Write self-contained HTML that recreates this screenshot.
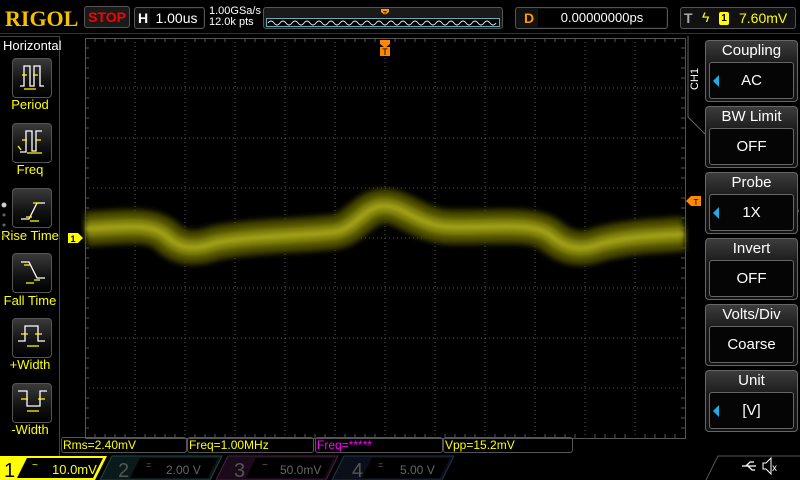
<!DOCTYPE html>
<html><head><meta charset="utf-8"><style>
*{margin:0;padding:0;box-sizing:border-box}
body{width:800px;height:480px;background:#000;position:relative;overflow:hidden;font-family:"Liberation Sans",sans-serif;color:#fff}
.a{position:absolute}
.btn{position:absolute;left:12px;width:40px;height:40px;border:1px solid #555;border-radius:4px;background:linear-gradient(#3a3a3a,#111 60%,#000)}
.lbl{position:absolute;left:0;width:60px;text-align:center;color:#ff0;font-size:13px}
.menu{position:absolute;left:705px;width:93px;height:62px;border:1px solid #666;border-radius:4px;background:linear-gradient(#3c3c3c,#1a1a1a 40%,#111)}
.menu .t{position:absolute;top:1px;left:0;width:100%;text-align:center;font-size:15px}
.menu .v{position:absolute;left:3px;right:3px;top:21px;height:37px;border:1px solid #666;border-radius:3px;background:#050505;text-align:center;font-size:15px;line-height:35px}
.tri{position:absolute;left:3px;top:12px;width:0;height:0;border-top:6px solid transparent;border-bottom:6px solid transparent;border-right:6px solid #1ab0e6}
.meas{position:absolute;top:437px;height:16px;border:1px solid #555;border-radius:3px;font-size:12px;line-height:14px;padding-left:1px;color:#ff0}
</style></head><body>
<div class="a" style="left:5px;top:6px;font:bold 22px 'Liberation Serif',serif;color:#f4c000">RIGOL</div>
<div class="a" style="left:84px;top:6px;width:46px;height:22px;border:1px solid #555;border-radius:3px;background:#1a1a1a;color:#f00;font-weight:bold;font-size:14px;text-align:center;line-height:20px">STOP</div>
<div class="a" style="left:134px;top:7px;width:71px;height:22px;border:1px solid #555;border-radius:3px;background:#111"><span class="a" style="left:3px;top:2px;font-weight:bold;font-size:14px">H</span><div class="a" style="left:15px;top:1px;width:53px;height:18px;background:#000;font-size:14px;text-align:center;line-height:18px">1.00us</div></div>
<div class="a" style="left:209px;top:6px;font-size:11px;line-height:11px">1.00GSa/s<br>12.0k pts</div>
<div class="a" style="left:263px;top:7px;width:240px;height:22px;border:1px solid #555;border-radius:3px;background:#1a1a1a"></div>
<svg class="a" style="left:266px;top:6px" width="234" height="24"><rect x="0.5" y="12.5" width="233" height="8" fill="#000" stroke="#6ab" stroke-width="1"/><path d="M2 17 Q5 13 8 17 T14 17 T20 17 T26 17 T32 17 T38 17 T44 17 T50 17 T56 17 T62 17 T68 17 T74 17 T80 17 T86 17 T92 17 T98 17 T104 17 T110 17 T116 17 T122 17 T128 17 T134 17 T140 17 T146 17 T152 17 T158 17 T164 17 T170 17 T176 17 T182 17 T188 17 T194 17 T200 17 T206 17 T212 17 T218 17 T224 17 T230 17" fill="none" stroke="#ddd" stroke-width="1"/><path d="M115 3h8v3l-4 3-4-3z" fill="#f90"/><text x="119" y="10" font-size="7" text-anchor="middle" fill="#000" font-family="Liberation Sans">T</text></svg>
<div class="a" style="left:515px;top:7px;width:153px;height:22px;border:1px solid #555;border-radius:3px;background:#111"><span class="a" style="left:8px;top:2px;font-weight:bold;font-size:14px;color:#f90">D</span><div class="a" style="left:22px;top:1px;width:128px;height:18px;background:#000;font-size:13px;text-align:center;line-height:18px">0.00000000ps</div></div>
<div class="a" style="left:680px;top:7px;width:116px;height:22px;border:1px solid #555;border-radius:3px;background:#111"><span class="a" style="left:3px;top:2px;font-weight:bold;font-size:14px;color:#aaa">T</span><span class="a" style="left:21px;top:1px;font-size:14px;color:#ff0">&#x03DF;</span><span class="a" style="left:38px;top:4px;width:10px;height:13px;background:#ff0;border-radius:2px;color:#000;font-size:10px;text-align:center;line-height:13px;font-weight:bold">1</span><span class="a" style="left:58px;top:2px;font-size:14px;color:#ff0">7.60mV</span></div>
<div class="a" style="left:0;top:33px;width:800px;height:1px;background:#333"></div>
<div class="a" style="left:0;top:36px;width:60px;height:444px;border-right:1px solid #444;border-top:1px solid #444"></div>
<div class="a" style="left:3px;top:38px;font-size:13px">Horizontal</div>
<div class="btn" style="top:58px"></div><div class="lbl" style="top:97px">Period</div>
<div class="btn" style="top:123px"></div><div class="lbl" style="top:162px">Freq</div>
<div class="btn" style="top:188px"></div><div class="lbl" style="top:228px">Rise Time</div>
<div class="btn" style="top:253px"></div><div class="lbl" style="top:293px">Fall Time</div>
<div class="btn" style="top:318px"></div><div class="lbl" style="top:357px">+Width</div>
<div class="btn" style="top:383px"></div><div class="lbl" style="top:422px">-Width</div>
<svg class="a" style="left:0;top:0" width="60" height="440" fill="none" stroke-width="1.3">
<path d="M20 86h4V66h6v20h4V66h6v20h4" stroke="#fff"/><path d="M22 75h5M33 75h5M24 89h12" stroke="#ff0"/>
<path d="M20 152h6V131h6v20h4V131h6" stroke="#fff"/><path d="M22 140h5M36 140h5M27 153h15M18 146l3 4" stroke="#ff0"/>
<path d="M21 219h8l8-16h8" stroke="#fff"/><path d="M26 217h6M33 203h6M30 221h9" stroke="#ff0"/>
<path d="M21 262h8l8 16h8" stroke="#fff"/><path d="M24 265h6M34 280h6M26 283h8" stroke="#ff0"/>
<path d="M18 341h7V326h13v15h7" stroke="#fff"/><path d="M21 334h7M35 334h7M27 346h12" stroke="#ff0"/>
<path d="M18 391h9v15h13V391h7" stroke="#fff"/><path d="M21 399h7M38 399h7M27 411h12" stroke="#ff0"/>
<circle cx="4" cy="205" r="2.5" fill="#ccc" stroke="none"/><circle cx="4" cy="215" r="1.5" fill="#666" stroke="none"/><circle cx="4" cy="225" r="1.5" fill="#666" stroke="none"/><circle cx="4" cy="235" r="1.5" fill="#666" stroke="none"/>
</svg>
<svg class="a" style="left:0;top:0" width="800" height="480">
<defs><filter id="b" filterUnits="userSpaceOnUse" x="60" y="150" width="650" height="150"><feGaussianBlur stdDeviation="3"/></filter><filter id="b2" filterUnits="userSpaceOnUse" x="60" y="150" width="650" height="150"><feGaussianBlur stdDeviation="1.2"/></filter></defs>
<rect x="85.5" y="38.5" width="600" height="400" fill="none" stroke="#555"/>
<g stroke="#555" stroke-dasharray="1 3">
<path d="M135 38v400M185 38v400M235 38v400M285 38v400M335 38v400M435 38v400M485 38v400M535 38v400M585 38v400M635 38v400"/>
<path d="M85 88h600M85 138h600M85 188h600M85 288h600M85 338h600M85 388h600"/>
<path d="M85 238h600M385 38v400"/>
</g>
<g stroke="#555">
<path d="M95 38v4M105 38v4M115 38v4M125 38v4M145 38v4M155 38v4M165 38v4M175 38v4M195 38v4M205 38v4M215 38v4M225 38v4M245 38v4M255 38v4M265 38v4M275 38v4M295 38v4M305 38v4M315 38v4M325 38v4M345 38v4M355 38v4M365 38v4M375 38v4M395 38v4M405 38v4M415 38v4M425 38v4M445 38v4M455 38v4M465 38v4M475 38v4M495 38v4M505 38v4M515 38v4M525 38v4M545 38v4M555 38v4M565 38v4M575 38v4M595 38v4M605 38v4M615 38v4M625 38v4M645 38v4M655 38v4M665 38v4M675 38v4"/>
<path d="M95 438v-4M105 438v-4M115 438v-4M125 438v-4M145 438v-4M155 438v-4M165 438v-4M175 438v-4M195 438v-4M205 438v-4M215 438v-4M225 438v-4M245 438v-4M255 438v-4M265 438v-4M275 438v-4M295 438v-4M305 438v-4M315 438v-4M325 438v-4M345 438v-4M355 438v-4M365 438v-4M375 438v-4M395 438v-4M405 438v-4M415 438v-4M425 438v-4M445 438v-4M455 438v-4M465 438v-4M475 438v-4M495 438v-4M505 438v-4M515 438v-4M525 438v-4M545 438v-4M555 438v-4M565 438v-4M575 438v-4M595 438v-4M605 438v-4M615 438v-4M625 438v-4M645 438v-4M655 438v-4M665 438v-4M675 438v-4"/>
<path d="M85 48h4M85 58h4M85 68h4M85 78h4M85 98h4M85 108h4M85 118h4M85 128h4M85 148h4M85 158h4M85 168h4M85 178h4M85 198h4M85 208h4M85 218h4M85 228h4M85 248h4M85 258h4M85 268h4M85 278h4M85 298h4M85 308h4M85 318h4M85 328h4M85 348h4M85 358h4M85 368h4M85 378h4M85 398h4M85 408h4M85 418h4M85 428h4"/>
<path d="M685 48h-4M685 58h-4M685 68h-4M685 78h-4M685 98h-4M685 108h-4M685 118h-4M685 128h-4M685 148h-4M685 158h-4M685 168h-4M685 178h-4M685 198h-4M685 208h-4M685 218h-4M685 228h-4M685 248h-4M685 258h-4M685 268h-4M685 278h-4M685 298h-4M685 308h-4M685 318h-4M685 328h-4M685 348h-4M685 358h-4M685 368h-4M685 378h-4M685 398h-4M685 408h-4M685 418h-4M685 428h-4"/>
</g>
<g fill="none">
<path d="M86 229 C130 226 150 224 165 235 C180 250 195 250 215 243 C250 236 300 236 335 232 C355 229 365 205 385 206 C405 207 420 226 450 227 C500 228 530 222 550 235 C565 248 580 252 600 244 C630 236 660 236 684 234" stroke="#4a4a00" stroke-width="34" filter="url(#b)"/>
<path d="M86 229 C130 226 150 224 165 235 C180 250 195 250 215 243 C250 236 300 236 335 232 C355 229 365 205 385 206 C405 207 420 226 450 227 C500 228 530 222 550 235 C565 248 580 252 600 244 C630 236 660 236 684 234" stroke="#8a8a08" stroke-width="16" filter="url(#b)"/>
<path d="M86 229 C130 226 150 224 165 235 C180 250 195 250 215 243 C250 236 300 236 335 232 C355 229 365 205 385 206 C405 207 420 226 450 227 C500 228 530 222 550 235 C565 248 580 252 600 244 C630 236 660 236 684 234" stroke="#b0b020" stroke-width="5" opacity="0.5" filter="url(#b2)"/>
</g>
<rect x="68" y="233" width="10" height="10" fill="#ff0"/><path d="M78 233l5 5-5 5z" fill="#ff0"/><text x="73" y="242" font-size="9" font-family="Liberation Sans" font-weight="bold" text-anchor="middle" fill="#000">1</text>
<path d="M380 40h10v4l-5 4-5-4z" fill="#f80"/><rect x="380" y="47" width="10" height="9" fill="#f80"/><text x="385" y="55" font-size="9" font-family="Liberation Sans" text-anchor="middle" fill="#000">T</text>
<path d="M686 201l5-5h10v10h-10z" fill="#f80"/><text x="696" y="205" font-size="8" font-family="Liberation Sans" text-anchor="middle" fill="#000">T</text>
<path d="M688 36v81l18 18" stroke="#666" fill="none"/>
<circle cx="796" cy="211" r="2.5" fill="#ccc"/><circle cx="796" cy="221" r="1.5" fill="#666"/>
</svg>
<div class="a" style="left:685px;top:70px;width:20px;height:20px;font-size:11px;transform:rotate(-90deg);text-align:center;line-height:20px">CH1</div>
<div class="menu" style="top:40px"><div class="t">Coupling</div><div class="v"><div class="tri"></div>AC</div></div>
<div class="menu" style="top:106px"><div class="t">BW Limit</div><div class="v">OFF</div></div>
<div class="menu" style="top:172px"><div class="t">Probe</div><div class="v"><div class="tri"></div>1X</div></div>
<div class="menu" style="top:238px"><div class="t">Invert</div><div class="v">OFF</div></div>
<div class="menu" style="top:304px"><div class="t">Volts/Div</div><div class="v">Coarse</div></div>
<div class="menu" style="top:370px"><div class="t">Unit</div><div class="v"><div class="tri"></div>[V]</div></div>
<div class="meas" style="left:61px;width:126px">Rms=2.40mV</div>
<div class="meas" style="left:187px;width:127px">Freq=1.00MHz</div>
<div class="meas" style="left:315px;width:128px;color:#f0f">Freq=*****</div>
<div class="meas" style="left:443px;width:130px">Vpp=15.2mV</div>
<svg class="a" style="left:0;top:455px" width="800" height="25" font-family="Liberation Sans">
<path d="M0 1h107l-12 24H0z" fill="#ff0"/><path d="M27 3h76l-10 20H17z" fill="#000"/>
<text x="4" y="22" font-size="20" fill="#000">1</text><text x="32" y="13" font-size="10" fill="#ff0">~</text><text x="52" y="19" font-size="13" fill="#ff0">10.0mV</text>
<path d="M112 1h110l-12 24H100z" fill="#0a1a1a" stroke="#244"/><path d="M140 3h78l-10 20H130z" fill="#000"/>
<text x="118" y="22" font-size="20" fill="#555">2</text><text x="146" y="13" font-size="9" fill="#666">=</text><text x="166" y="19" font-size="12" fill="#666">2.00 V</text>
<path d="M228 1h110l-12 24H216z" fill="#1a0a1a" stroke="#424"/><path d="M256 3h78l-10 20H246z" fill="#000"/>
<text x="234" y="22" font-size="20" fill="#555">3</text><text x="262" y="13" font-size="10" fill="#666">~</text><text x="280" y="19" font-size="12" fill="#666">50.0mV</text>
<path d="M344 1h110l-12 24H332z" fill="#0a0f1a" stroke="#234"/><path d="M372 3h78l-10 20H362z" fill="#000"/>
<text x="352" y="22" font-size="20" fill="#555">4</text><text x="378" y="13" font-size="9" fill="#666">=</text><text x="400" y="19" font-size="12" fill="#666">5.00 V</text>
<path d="M706 25l12-24h82" fill="none" stroke="#555"/>
<path d="M742 11h14M746 11l4-4h4M748 11l4 4h3" stroke="#fff" fill="none" stroke-width="1.3"/>
<path d="M763 8h3l5-5v16l-5-5h-3z" fill="none" stroke="#fff"/><text x="772" y="16" font-size="10" fill="#fff">x</text>
</svg>
</body></html>
